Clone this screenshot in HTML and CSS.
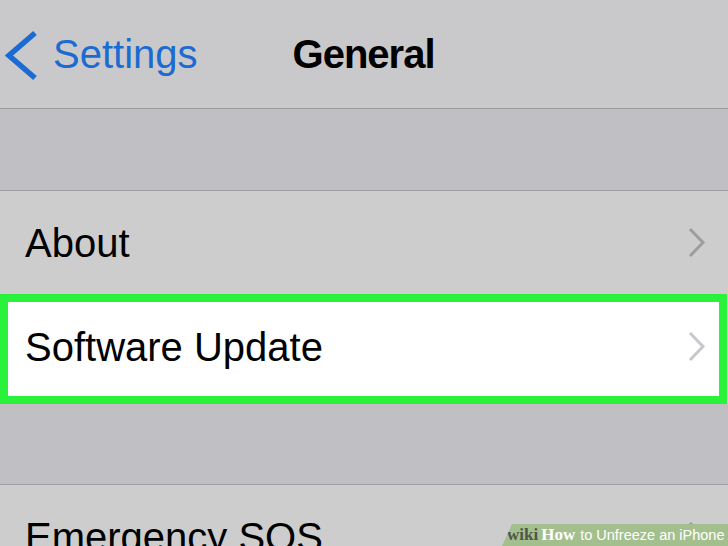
FILE: index.html
```html
<!DOCTYPE html>
<html>
<head>
<meta charset="utf-8">
<link rel="stylesheet" href="styles.css">
</head>
<body>
<div class="screen">
  <header class="nav">
    <div class="back">
      <svg class="back-icon" width="36" height="52" viewBox="0 0 36 52"><path d="M30 3 L4 25.5 L30 48" fill="none" stroke="#1b6bd2" stroke-width="5.5" stroke-linejoin="miter"/></svg>
      <span class="back-label">Settings</span>
    </div>
    <h1 class="title">General</h1>
  </header>
  <div class="gap"></div>
  <div class="row">
    <span class="label">About</span>
    <svg class="chev" width="20" height="32" viewBox="0 0 20 32"><path d="M4 2 L17 15.5 L4 29" fill="none" stroke="#9d9d9f" stroke-width="3"/></svg>
  </div>
  <div class="row row-highlight">
    <span class="label">Software Update</span>
    <svg class="chev" width="20" height="32" viewBox="0 0 20 32"><path d="M4 2 L17 15.5 L4 29" fill="none" stroke="#c8c8cc" stroke-width="3"/></svg>
  </div>
  <div class="gap gap-lower"></div>
  <div class="row">
    <span class="label">Emergency SOS</span>
    <svg class="chev" width="20" height="32" viewBox="0 0 20 32"><path d="M4 2 L17 15.5 L4 29" fill="none" stroke="#9d9d9f" stroke-width="3"/></svg>
  </div>
  <div class="watermark"><span class="wm-wiki">wiki</span><span class="wm-how">How</span><span class="wm-text">to Unfreeze an iPhone</span></div>
</div>
</body>
</html>
```
FILE: styles.css
```css
* { box-sizing: border-box; }
html, body {
  margin: 0;
  padding: 0;
  background: #cdcdcd;
}
.screen {
  position: relative;
  width: 728px;
  height: 546px;
  overflow: hidden;
  font-family: "Liberation Sans", Arial, sans-serif;
}
.nav {
  height: 109px;
  background: #c9c9cb;
  border-bottom: 1px solid #9b9b9e;
  display: flex;
  align-items: flex-start;
  padding: 30px 0 0 5px;
}
.back {
  display: flex;
  align-items: flex-start;
}
.back-icon {
  display: block;
  flex: none;
}
.back-label {
  margin-left: 12px;
  margin-top: 1px;
  font-size: 40px;
  line-height: 46px;
  color: #1b6bd2;
}
.title {
  margin: 1px 0 0 95px;
  font-size: 40px;
  line-height: 46px;
  font-weight: bold;
  letter-spacing: -1px;
  color: #000;
}
.gap {
  height: 82px;
  background: #c0bfc4;
  border-bottom: 1px solid #9e9ea1;
}
.gap-lower {
  height: 81px;
}
.row {
  height: 103px;
  background: #cdcdcd;
  display: flex;
  align-items: center;
  justify-content: space-between;
  padding: 0 22px 0 25px;
}
.label {
  font-size: 40px;
  line-height: 46px;
  color: #000;
  margin-top: 0;
}
.chev {
  display: block;
  flex: none;
}
.row-highlight {
  height: 110px;
  width: 727px;
  background: #fff;
  border: 8px solid #2af23b;
  padding: 0 13px 0 17px;
}
.row-highlight .label {
  margin-top: -4px;
}
.row-highlight .chev {
  margin-top: -4px;
}
.watermark {
  position: absolute;
  right: 0;
  bottom: 0;
  width: 226px;
  height: 22px;
  background: #a4bf8e;
  clip-path: polygon(10px 0, 100% 0, 100% 100%, 0 100%);
  display: flex;
  align-items: center;
  padding-left: 5px;
  white-space: nowrap;
}
.wm-wiki {
  font-family: "Liberation Serif", "Times New Roman", serif;
  font-weight: bold;
  font-size: 17px;
  color: #4f5548;
}
.wm-how {
  font-family: "Liberation Serif", "Times New Roman", serif;
  font-weight: bold;
  font-size: 17px;
  color: #fff;
  margin-left: 3px;
}
.wm-text {
  font-size: 14.5px;
  color: #fff;
  margin-left: 5px;
}
```
